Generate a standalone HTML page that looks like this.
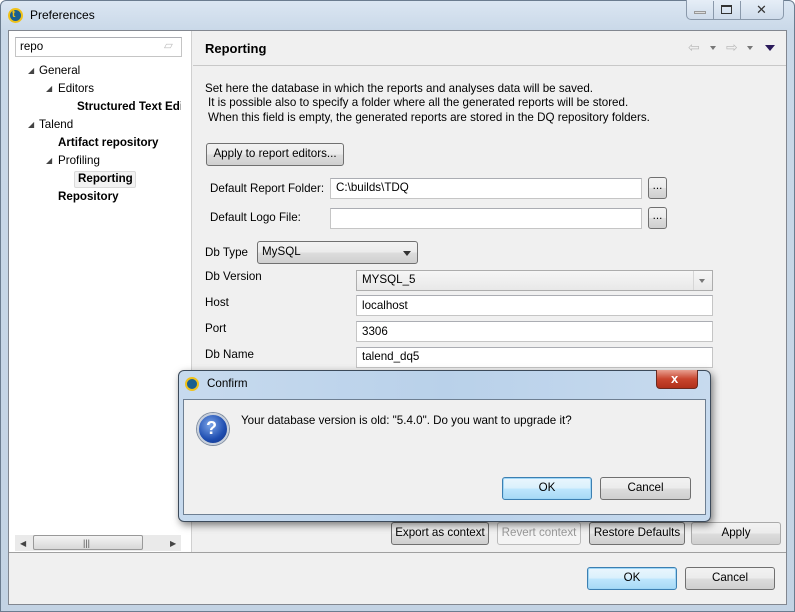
<!DOCTYPE html>
<html><head><style>
*{box-sizing:border-box;margin:0;padding:0}
body{width:795px;height:612px;overflow:hidden;font-family:"Liberation Sans",sans-serif;font-size:11.6px;color:#000;background:#fff;position:relative}
.a{position:absolute}
.t{position:absolute;white-space:nowrap;line-height:14px}
.b{font-weight:bold}
.inp{position:absolute;background:#fff;border:1px solid #c5c5c5;border-top-color:#abadb3}
.btn{position:absolute;border:1px solid #707070;border-radius:3px;background:linear-gradient(#f2f2f2,#ebebeb 50%,#dddddd 51%,#cfcfcf);text-align:center;line-height:20px;white-space:nowrap}
.def{border-color:#3c7fb1;background:linear-gradient(#eaf6fd,#d9f0fc 50%,#bee6fd 51%,#a7d9f5);box-shadow:inset 0 0 0 1px #9fd6f6}
.tri{position:absolute;width:0;height:0;border-left:3px solid transparent;border-right:3px solid transparent;border-top:4px solid #333}
</style></head><body>
<div class="a" style="left:0;top:0;width:795px;height:612px;background:linear-gradient(#dbe6f2,#c9d8e8 30px,#c3d3e4);border:1px solid #6b7c8f;border-radius:6px 6px 0 0"></div>
<div class="a" style="left:8px;top:8px;width:15px;height:15px;border-radius:50%;background:#1a5f8f;border:2px solid #f0c21a"></div>
<div class="t" style="left:12px;top:8px;font-size:10px;color:#f0c21a;font-weight:bold">t</div>
<div class="t" style="left:30px;top:8px;font-size:12px">Preferences</div>
<div class="a" style="left:686px;top:0;width:98px;height:20px;border:1px solid #8a99ab;border-top:none;border-radius:0 0 5px 5px;background:linear-gradient(#e6eef7,#cfdceb)"></div>
<div class="a" style="left:713px;top:1px;width:1px;height:18px;background:#8a99ab"></div>
<div class="a" style="left:740px;top:1px;width:1px;height:18px;background:#8a99ab"></div>
<div class="a" style="left:694px;top:11px;width:12px;height:3px;border:1px solid #999;background:#ddd"></div>
<div class="a" style="left:721px;top:5px;width:11px;height:9px;border:1px solid #333;border-top-width:2px"></div>
<div class="t" style="left:756px;top:3px;font-size:13px;color:#333">✕</div>
<div class="a" style="left:8px;top:30px;width:779px;height:575px;background:#f0f0f0;border:1px solid #828790"></div>
<div class="a" style="left:9px;top:31px;width:182px;height:521px;background:#fff"></div>
<div class="a" style="left:191px;top:31px;width:1px;height:521px;background:#d0d0d0"></div>
<div class="inp" style="left:15px;top:37px;width:167px;height:20px"></div>
<div class="t" style="left:20px;top:40px">repo</div>
<div class="t" style="left:164px;top:39px;color:#bbb">▱</div>
<div class="t" style="left:28px;top:64px;font-size:8px;color:#444">◢</div><div class="t" style="left:39px;top:64px">General</div>
<div class="t" style="left:46px;top:82px;font-size:8px;color:#444">◢</div><div class="t" style="left:58px;top:82px">Editors</div>
<div class="t b" style="left:77px;top:100px;width:104px;overflow:hidden">Structured Text Editors</div>
<div class="t" style="left:28px;top:118px;font-size:8px;color:#444">◢</div><div class="t" style="left:39px;top:118px">Talend</div>
<div class="t b" style="left:58px;top:136px">Artifact repository</div>
<div class="t" style="left:46px;top:154px;font-size:8px;color:#444">◢</div><div class="t" style="left:58px;top:154px">Profiling</div>
<div class="a" style="left:74px;top:171px;width:62px;height:17px;background:#f2f2f2;border:1px solid #dadada;border-radius:2px"></div>
<div class="t b" style="left:78px;top:172px">Reporting</div>
<div class="t b" style="left:58px;top:190px">Repository</div>
<div class="a" style="left:15px;top:535px;width:166px;height:16px;background:#eaeaea"></div>
<div class="a" style="left:33px;top:535px;width:110px;height:15px;border:1px solid #999;border-radius:2px;background:linear-gradient(#f3f3f3,#d8d8d8)"></div>
<div class="t" style="left:83px;top:536px;font-size:9px;color:#555">|||</div>
<div class="t" style="left:20px;top:537px;font-size:8px;color:#444">◀</div>
<div class="t" style="left:170px;top:537px;font-size:8px;color:#444">▶</div>
<div class="t b" style="left:205px;top:42px;font-size:13px">Reporting</div>
<div class="a" style="left:193px;top:65px;width:593px;height:1px;background:#c8c8c8"></div>
<div class="t" style="left:688px;top:40px;font-size:14px;color:#bbb">⇦</div>
<div class="tri" style="left:710px;top:46px;border-top-color:#777"></div>
<div class="t" style="left:726px;top:40px;font-size:14px;color:#bbb">⇨</div>
<div class="tri" style="left:747px;top:46px;border-top-color:#777"></div>
<div class="tri" style="left:765px;top:45px;border-left-width:5px;border-right-width:5px;border-top:6px solid #2a1a5a"></div>
<div class="t" style="left:205px;top:82px">Set here the database in which the reports and analyses data will be saved.</div>
<div class="t" style="left:208px;top:96px">It is possible also to specify a folder where all the generated reports will be stored.</div>
<div class="t" style="left:208px;top:111px">When this field is empty, the generated reports are stored in the DQ repository folders.</div>
<div class="btn" style="left:206px;top:143px;width:138px;height:23px">Apply to report editors...</div>
<div class="t" style="left:210px;top:182px">Default Report Folder:</div>
<div class="inp" style="left:330px;top:178px;width:312px;height:21px"></div>
<div class="t" style="left:336px;top:181px">C:\builds\TDQ</div>
<div class="btn" style="left:648px;top:177px;width:19px;height:22px;line-height:16px">...</div>
<div class="t" style="left:210px;top:211px">Default Logo File:</div>
<div class="inp" style="left:330px;top:208px;width:312px;height:21px"></div>
<div class="btn" style="left:648px;top:207px;width:19px;height:22px;line-height:16px">...</div>
<div class="t" style="left:205px;top:246px">Db Type</div>
<div class="btn" style="left:257px;top:241px;width:161px;height:23px;text-align:left;padding-left:4px">MySQL</div>
<div class="tri" style="left:403px;top:251px;border-left-width:4px;border-right-width:4px;border-top-width:5px"></div>
<div class="t" style="left:205px;top:270px">Db Version</div>
<div class="a" style="left:356px;top:270px;width:357px;height:21px;border:1px solid #adadad;background:linear-gradient(#f6f6f6,#e8e8e8)"></div>
<div class="a" style="left:693px;top:271px;width:1px;height:19px;background:#d6d6d6"></div>
<div class="t" style="left:362px;top:273px">MYSQL_5</div>
<div class="tri" style="left:699px;top:279px;border-top-color:#777"></div>
<div class="t" style="left:205px;top:296px">Host</div>
<div class="inp" style="left:356px;top:295px;width:357px;height:21px"></div>
<div class="t" style="left:362px;top:299px">localhost</div>
<div class="t" style="left:205px;top:322px">Port</div>
<div class="inp" style="left:356px;top:321px;width:357px;height:21px"></div>
<div class="t" style="left:362px;top:325px">3306</div>
<div class="t" style="left:205px;top:348px">Db Name</div>
<div class="inp" style="left:356px;top:347px;width:357px;height:21px"></div>
<div class="t" style="left:362px;top:350px">talend_dq5</div>
<div class="btn" style="left:391px;top:522px;width:98px;height:23px">Export as context</div>
<div class="btn" style="left:497px;top:522px;width:84px;height:23px;color:#999;border-color:#bbb;background:#f4f4f4">Revert context</div>
<div class="btn" style="left:589px;top:522px;width:96px;height:23px">Restore Defaults</div>
<div class="btn" style="left:691px;top:522px;width:90px;height:23px;border-color:#aaa">Apply</div>
<div class="a" style="left:9px;top:552px;width:777px;height:1px;background:#a0a0a0"></div>
<div class="btn def" style="left:587px;top:567px;width:90px;height:23px">OK</div>
<div class="btn" style="left:685px;top:567px;width:90px;height:23px">Cancel</div>
<div class="a" style="left:178px;top:370px;width:533px;height:152px;border:1px solid #3c4a5a;border-radius:6px;background:linear-gradient(90deg,#c7daee,#b9d1ea 50%,#c7daee);box-shadow:2px 3px 8px rgba(0,0,0,.5)"></div>
<div class="a" style="left:185px;top:377px;width:14px;height:14px;border-radius:50%;background:#1a5f8f;border:2px solid #f0c21a"></div>
<div class="t" style="left:207px;top:377px">Confirm</div>
<div class="a" style="left:656px;top:370px;width:42px;height:19px;border:1px solid #6b2a20;border-top:none;border-radius:0 0 4px 4px;background:linear-gradient(#e8a090,#c8452e 50%,#b0301a)"></div>
<div class="t b" style="left:671px;top:372px;color:#fff;font-size:13px">x</div>
<div class="a" style="left:183px;top:399px;width:523px;height:116px;background:#f0f0f0;border:1px solid #6e7f92"></div>
<div class="a" style="left:197px;top:413px;width:32px;height:32px;border-radius:50%;background:radial-gradient(circle at 40% 35%,#7aa4e8,#1e4db0 60%,#0f2f80);border:2px solid #c8d0dc;box-shadow:0 0 0 1px #7f8da0"></div>
<div class="t b" style="left:206px;top:419px;color:#fff;font-size:18px;line-height:18px">?</div>
<div class="t" style="left:241px;top:414px">Your database version is old: "5.4.0". Do you want to upgrade it?</div>
<div class="btn def" style="left:502px;top:477px;width:90px;height:23px">OK</div>
<div class="btn" style="left:600px;top:477px;width:91px;height:23px">Cancel</div>
</body></html>
